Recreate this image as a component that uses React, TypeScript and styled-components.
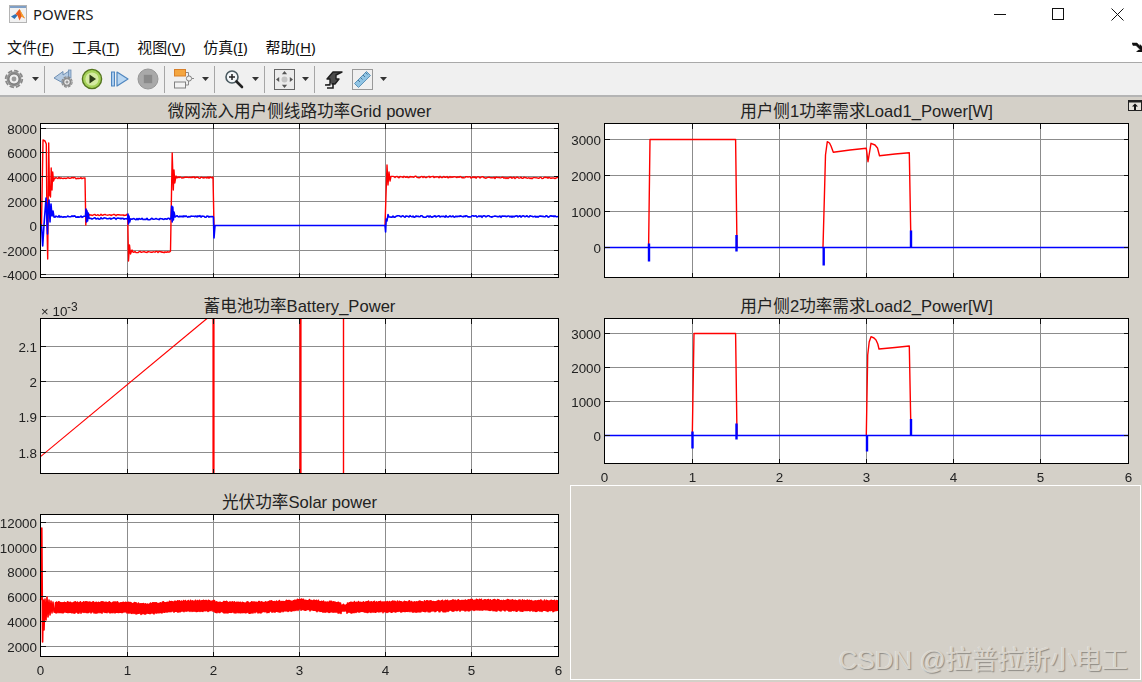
import React from 'react'
import styled, { createGlobalStyle } from 'styled-components'

type Point = [number, number]

const FONT = `"Liberation Sans", "Noto Sans CJK SC", sans-serif`
const UI_FONT = `"Noto Sans", "Noto Sans CJK SC", sans-serif`

const GlobalStyle = createGlobalStyle`
    html, body {
        margin: 0;
        padding: 0;
        background: #fff;
        overflow: hidden;
    }
`

/* ---------- trace helpers ---------- */

const rand = (i: number) => {
    const v = Math.sin(i * 12.9898 + 4.1) * 43758.5453
    return v - Math.floor(v)
}

const toPath = (pts: Point[]) =>
    pts.map(([x, y], i) => `${i === 0 ? 'M' : 'L'}${x.toFixed(1)} ${y.toFixed(1)}`).join(' ')

// flat run with a bit of measurement noise on it
const noisy = (x0: number, x1: number, y: number, amp: number, drift = 0): Point[] => {
    const pts: Point[] = []
    let i = Math.floor(x0 * 7)
    for (let x = x0; x <= x1; x += 1) {
        const slow = drift ? Math.sin(x / 38) * drift : 0
        pts.push([x, y + slow + (rand(i) - 0.5) * 2 * amp])
        i++
    }
    return pts
}

const lerp = (stops: Point[], x: number) => {
    for (let i = 1; i < stops.length; i++) {
        if (x <= stops[i][0]) {
            const [ax, ay] = stops[i - 1]
            const [bx, by] = stops[i]
            return ay + ((x - ax) / (bx - ax)) * (by - ay)
        }
    }
    return stops[stops.length - 1][1]
}

const GRID_RED_A: Point[] = [
    [41.5, 225], [43, 140], [45, 141], [46.3, 144], [47, 226], [47.7, 259], [48.7, 143],
    [49.5, 195], [50.5, 197], [51.2, 168], [52, 190], [52.7, 172], [53.5, 181], [54.5, 178],
    ...noisy(55, 84, 178, 0.7),
    [85, 178], [85.8, 225], [86.6, 210], [87.5, 218], [89, 214.5],
    ...noisy(90, 127, 215, 0.7),
    [127.7, 215], [128.5, 261], [129.5, 245], [130.5, 254], [132, 250],
    ...noisy(133, 170, 252, 0.7),
    [170.5, 251], [172.2, 153], [173.3, 190], [174, 170], [174.8, 183], [176, 176],
    ...noisy(177, 212, 177.5, 0.7),
    [213, 177], [214, 225.5],
]

const GRID_RED_B: Point[] = [
    [385, 225.5], [387, 165], [388, 185], [389, 172], [390, 181],
    ...noisy(391, 558, 177.5, 0.8, 0.5),
]

const GRID_BLUE: Point[] = [
    [40.5, 225.5], [41.5, 225], [42.7, 246], [44, 225], [46, 198], [47.5, 234], [48.2, 205], [49, 200],
    [50, 222], [51, 204], [52, 216], [53, 211], [54, 217],
    ...noisy(55, 84, 216.5, 0.8),
    [85.5, 216], [86, 209], [86.5, 222], [87, 211], [87.6, 221], [88.3, 213], [89, 218],
    ...noisy(90, 126, 218.5, 0.8),
    [127.5, 219], [128, 214], [128.5, 224], [129, 216], [129.7, 222], [130.5, 219],
    ...noisy(131, 170, 219, 0.8),
    [171, 218], [171.7, 206], [172.2, 222], [172.8, 207], [173.4, 220], [174, 212], [175, 217],
    ...noisy(176, 212, 216.5, 0.8),
    [213.4, 217], [214, 238], [215, 225.5], [385, 225.5], [385.6, 232], [386.2, 219], [387, 221], [388, 214.5], [389, 217],
    ...noisy(390, 558, 216.5, 0.8),
]

const BATTERY_LINE: Point[] = [[40.5, 456.7], [207, 318.5]]

const SOLAR_CENTER: Point[] = [
    [55, 607.5], [127, 607.5], [145, 609], [175, 606.5], [213, 605.5], [216, 607], [250, 607.5],
    [290, 606], [300, 604.5], [330, 607], [345, 608], [360, 607], [420, 606.5], [480, 605], [558, 606],
]

const solarBand = (): Point[] => {
    const pts: Point[] = [
        [40.5, 600], [41, 598], [41.8, 528], [42.6, 642], [43.3, 600], [44, 630], [45, 599], [46, 620],
        [47, 597], [48, 617], [49, 600], [50, 615], [51, 601], [52, 613], [53, 602], [54, 612],
    ]
    let i = 0
    for (let x = 55; x <= 558; x += 0.5) {
        const half = x > 341 && x < 347 ? 3.5 : 5.8
        const sign = i % 2 === 0 ? 1 : -1
        pts.push([x, lerp(SOLAR_CENTER, x) + sign * half * (0.72 + 0.28 * rand(i))])
        i++
    }
    return pts
}

const LOAD1_RED_A: Point[] = [[648.6, 247], [650, 139.5], [735.6, 139.5], [737, 247]]

const LOAD1_RED_B: Point[] = [
    [823, 247], [824.3, 200], [825.5, 155], [827.3, 141.7], [829.5, 143], [831, 146], [833.3, 152.3],
    [850, 150], [866.3, 148.3], [868, 161.7], [871, 143.3], [875, 145], [877.5, 148], [879.5, 155.7],
    [895, 154], [909.3, 152.7], [911, 247],
]

const LOAD2_RED_A: Point[] = [[692.3, 435], [694, 333.5], [735.6, 333.5], [737, 435]]

const LOAD2_RED_B: Point[] = [
    [866.3, 435], [867.7, 355], [869.2, 342], [871, 336.7], [874, 338], [876, 340], [877.8, 344],
    [879, 349], [895, 347.5], [909.3, 346], [911, 435],
]

/* ---------- icons ---------- */

const Caret = () => (
    <svg width="7" height="4" viewBox="0 0 7 4"><path d="M0 0h7L3.5 4z" fill="#333" /></svg>
)

const GearShape = ({ cx, cy, r }: { cx: number; cy: number; r: number }) => (
    <g>
        <circle cx={cx} cy={cy} r={r * 0.92} fill="none" stroke="#8a8a8a" strokeWidth={r * 0.2} strokeDasharray={`${r * 0.5} ${r * 0.22}`} />
        <circle cx={cx} cy={cy} r={r * 0.82} fill="#8e8e8e" />
        <circle cx={cx} cy={cy} r={r * 0.56} fill="#efefef" stroke="#6c6c6c" strokeWidth={r * 0.1} />
        <circle cx={cx} cy={cy} r={r * 0.27} fill="#9a9a9a" />
    </g>
)

const GearIcon = () => (
    <svg width="20" height="20" viewBox="0 0 20 20"><GearShape cx={10} cy={10} r={9} /></svg>
)

const BackIcon = () => (
    <svg width="22" height="20" viewBox="0 0 22 20">
        <path d="M1 9L10 2.5v3.5L16 2v8L10 12v2z" fill="#b5cbe2" stroke="#6f8fb3" strokeWidth="1" strokeLinejoin="round" />
        <rect x="15.5" y="1" width="2.5" height="8" fill="#a9c2dd" stroke="#6f8fb3" strokeWidth=".8" />
        <GearShape cx={14} cy={13} r={5.6} />
    </svg>
)

const PlayIcon = () => (
    <svg width="22" height="22" viewBox="0 0 22 22">
        <circle cx="11" cy="11" r="9.6" fill="#a6d25a" stroke="#55761f" strokeWidth="1.4" />
        <circle cx="11" cy="11" r="6.6" fill="#d5eaa2" />
        <path d="M8.5 6.5L15 11l-6.5 4.5z" fill="#2c3a18" />
    </svg>
)

const StepIcon = () => (
    <svg width="20" height="18" viewBox="0 0 20 18">
        <rect x="1.5" y="2" width="3" height="14" fill="#a8cbee" stroke="#4f86bf" />
        <path d="M7 2L18 9L7 16z" fill="#b8d6f2" stroke="#4f86bf" strokeWidth="1.2" strokeLinejoin="round" />
    </svg>
)

const StopIcon = () => (
    <svg width="22" height="22" viewBox="0 0 22 22">
        <circle cx="11" cy="11" r="10" fill="#a9a9a9" stroke="#979797" />
        <rect x="6.8" y="6.8" width="8.4" height="8.4" fill="#8a8a8a" />
    </svg>
)

const BlocksIcon = () => (
    <svg width="22" height="22" viewBox="0 0 22 22">
        <path d="M12 4.5h3.5v4M12 17h3.5v-4M19 10.5h2" fill="none" stroke="#8a8a8a" strokeWidth="1" />
        <rect x="1.5" y="1.5" width="11" height="6.5" fill="#f4a640" stroke="#d8802a" />
        <rect x="1.5" y="14" width="11" height="6" fill="#f2f2f2" stroke="#808080" />
        <circle cx="16" cy="10.5" r="2.6" fill="#f2f2f2" stroke="#808080" />
    </svg>
)

const ZoomIcon = () => (
    <svg width="20" height="20" viewBox="0 0 20 20">
        <circle cx="8" cy="8" r="6" fill="#f4f7f9" stroke="#4a5a60" strokeWidth="1.6" />
        <path d="M8 5v6M5 8h6" stroke="#222" strokeWidth="1.5" />
        <path d="M12.5 12.5L18 18" stroke="#222" strokeWidth="2.6" strokeLinecap="round" />
    </svg>
)

const FitIcon = () => (
    <svg width="21" height="21" viewBox="0 0 21 21">
        <rect x=".5" y=".5" width="20" height="20" fill="#ececec" stroke="#666" />
        <path d="M10.5 2l2.6 3.2H7.9zM10.5 19l2.6-3.2H7.9zM2 10.5l3.2-2.6v5.2zM19 10.5l-3.2-2.6v5.2z" fill="#555" />
        <circle cx="10.5" cy="10.5" r="3" fill="#c4c4c4" />
    </svg>
)

const TraceIcon = () => (
    <svg width="20" height="20" viewBox="0 0 20 20">
        <path d="M1 16h5v-6H3l6-7h9l-6 3v4h3l-4 5H8v-1" fill="#4a4a4a" stroke="#1e1e1e" strokeWidth="1.4" strokeLinejoin="round" />
        <path d="M3 19h6v-5" fill="none" stroke="#1e1e1e" strokeWidth="1.6" />
    </svg>
)

const RulerIcon = () => (
    <svg width="21" height="21" viewBox="0 0 21 21">
        <rect x=".5" y=".5" width="20" height="20" fill="#f0f0f0" stroke="#999" />
        <path d="M2.5 14.5L14.5 2.5L18.5 6.5L6.5 18.5z" fill="#90c4e4" stroke="#5e94b8" />
        <path d="M6 11l2 2M8.5 8.5l2 2M11 6l2 2M13.5 3.5l2 2" stroke="#3e6f92" strokeWidth=".9" />
    </svg>
)

const MatlabIcon = () => (
    <svg width="18" height="18" viewBox="0 0 18 18">
        <rect x=".5" y=".5" width="17" height="17" fill="#f1f1f1" stroke="#b4b4b4" />
        <rect x="1" y="1" width="16" height="2" fill="#7f9fc6" />
        <path d="M2 11.5L6.5 9l2 1.4L5.5 14z" fill="#2f73b5" />
        <path d="M6.5 9L10.5 4l3 5.5L16 13.5 12.5 11.5 10.5 15.5 8.5 10.4z" fill="#e9591c" />
        <path d="M10.5 4l3 5.5L16 13.5 12.5 11.5z" fill="#f4a52c" />
    </svg>
)

/* ---------- chart ---------- */

type ChartProps = {
    originX: number
    originY: number
    width: number
    height: number
    left: number
    right: number
    top: number
    bottom: number
    xTicks: number[]
    yTicks: { y: number; label: string }[]
    showXLabels?: boolean
    children?: React.ReactNode
}

const Chart = ({ originX, originY, width, height, left, right, top, bottom, xTicks, yTicks, showXLabels, children }: ChartProps) => {
    const grid = [
        ...xTicks.slice(1, -1).map(x => `M${x} ${top}V${bottom}`),
        ...yTicks.map(t => `M${left} ${t.y}H${right}`),
    ].join('')
    const marks = [
        ...xTicks.slice(1, -1).map(x => `M${x} ${top}v5M${x} ${bottom}v-5`),
        ...yTicks.map(t => `M${left} ${t.y}h5M${right} ${t.y}h-5`),
    ].join('')
    return (
        <ChartSvg width={width} height={height} viewBox={`${originX} ${originY} ${width} ${height}`}>
            <rect x={left} y={top} width={right - left} height={bottom - top} fill="#fff" />
            <GridLines d={grid} />
            {children}
            <AxisLines d={marks} />
            <AxisBox x={left} y={top} width={right - left} height={bottom - top} />
            {yTicks.map(t => (
                <TickLabel key={t.label} x={left - 3.5} y={t.y + 5} textAnchor="end">{t.label}</TickLabel>
            ))}
            {showXLabels && xTicks.map((x, i) => (
                <TickLabel key={x} x={x} y={bottom + 18.5} textAnchor="middle">{i}</TickLabel>
            ))}
        </ChartSvg>
    )
}

const LEFT_TICKS = [40.5, 127.5, 213.5, 299.5, 385.5, 471.5, 558.5]
const RIGHT_TICKS = [604.5, 692.5, 779.5, 866.5, 953.5, 1040.5, 1128.5]

const MENU = [
    { label: '文件', key: 'F' },
    { label: '工具', key: 'T' },
    { label: '视图', key: 'V' },
    { label: '仿真', key: 'I' },
    { label: '帮助', key: 'H' },
]

export default function App() {
    return (
        <Window>
            <GlobalStyle />
            <TitleBar>
                <TitleIcon><MatlabIcon /></TitleIcon>
                <WindowTitle>POWERS</WindowTitle>
                <WindowControls>
                    <ControlSlot>
                        <svg width="13" height="13" viewBox="0 0 13 13"><path d="M0 6.5h12" stroke="#111" /></svg>
                    </ControlSlot>
                    <ControlSlot>
                        <svg width="13" height="13" viewBox="0 0 13 13"><rect x=".5" y=".5" width="11" height="11" fill="none" stroke="#111" /></svg>
                    </ControlSlot>
                    <ControlSlot>
                        <svg width="13" height="13" viewBox="0 0 13 13"><path d="M.5.5l12 12M12.5.5l-12 12" stroke="#111" /></svg>
                    </ControlSlot>
                </WindowControls>
            </TitleBar>

            <MenuBar>
                {MENU.map(m => (
                    <MenuItem key={m.key}>{m.label}(<u>{m.key}</u>)</MenuItem>
                ))}
                <UndockGlyph>
                    <svg width="10" height="10" viewBox="0 0 10 10">
                        <path d="M0 1h5l3 3.2V2.5L10 4.5V10H4.5L6.5 8H8.5L4 3.5H1z" fill="#111" stroke="#111" strokeWidth=".5" />
                    </svg>
                </UndockGlyph>
            </MenuBar>

            <Toolbar>
                <ToolGroup $first>
                    <ToolButton><GearIcon /></ToolButton>
                    <CaretSlot><Caret /></CaretSlot>
                </ToolGroup>
                <ToolGroup>
                    <ToolButton><BackIcon /></ToolButton>
                    <ToolButton><PlayIcon /></ToolButton>
                    <ToolButton><StepIcon /></ToolButton>
                    <ToolButton><StopIcon /></ToolButton>
                </ToolGroup>
                <ToolGroup>
                    <ToolButton><BlocksIcon /></ToolButton>
                    <CaretSlot><Caret /></CaretSlot>
                </ToolGroup>
                <ToolGroup>
                    <ToolButton><ZoomIcon /></ToolButton>
                    <CaretSlot><Caret /></CaretSlot>
                </ToolGroup>
                <ToolGroup>
                    <ToolButton><FitIcon /></ToolButton>
                    <CaretSlot><Caret /></CaretSlot>
                </ToolGroup>
                <ToolGroup>
                    <ToolButton><TraceIcon /></ToolButton>
                    <ToolButton><RulerIcon /></ToolButton>
                    <CaretSlot><Caret /></CaretSlot>
                </ToolGroup>
            </Toolbar>

            <PlotArea>
                <CollapseButton>
                    <svg width="14" height="11" viewBox="0 0 14 11">
                        <rect x=".5" y=".5" width="13" height="10" fill="#e4e1da" stroke="#222" />
                        <path d="M1 1h12v1.5H1z" fill="#222" />
                        <path d="M7 3.5l3 3H8V10H6V6.5H4z" fill="#111" />
                    </svg>
                </CollapseButton>

                <PlotColumn>
                    <PlotTitle $left={40} $right={11}>微网流入用户侧线路功率Grid power</PlotTitle>
                    <Chart
                        originX={0} originY={123} width={570} height={169}
                        left={40.5} right={558.5} top={123.5} bottom={277.5}
                        xTicks={LEFT_TICKS}
                        yTicks={[
                            { y: 128.5, label: '8000' }, { y: 152.5, label: '6000' }, { y: 176.5, label: '4000' },
                            { y: 201.5, label: '2000' }, { y: 225.5, label: '0' }, { y: 250.5, label: '-2000' },
                            { y: 274.5, label: '-4000' },
                        ]}
                    >
                        <Trace d={toPath(GRID_RED_A)} $color="#ff0000" $width={1.4} />
                        <Trace d={toPath(GRID_RED_B)} $color="#ff0000" $width={1.4} />
                        <Trace d={toPath(GRID_BLUE)} $color="#0000ff" $width={1.6} />
                    </Chart>

                    <PlotTitle $left={40} $right={11}>蓄电池功率Battery_Power</PlotTitle>
                    <Chart
                        originX={0} originY={318} width={570} height={170}
                        left={40.5} right={558.5} top={318.5} bottom={473.5}
                        xTicks={LEFT_TICKS}
                        yTicks={[
                            { y: 346.5, label: '2.1' }, { y: 381.5, label: '2' },
                            { y: 416.5, label: '1.9' }, { y: 452.5, label: '1.8' },
                        ]}
                    >
                        <Trace d={toPath(BATTERY_LINE)} $color="#ff0000" $width={1.1} />
                        <Trace d="M213.5 318.5V473.5" $color="#ff0000" $width={2.2} />
                        <Trace d="M300.5 318.5V473.5" $color="#ff0000" $width={2.2} />
                        <Trace d="M343.5 318.5V473.5" $color="#ff0000" $width={1.4} />
                        <TickLabel x={41} y={316} $size={13}>×</TickLabel>
                        <TickLabel x={52.5} y={316}>10</TickLabel>
                        <TickLabel x={67} y={311} $size={12}>-3</TickLabel>
                    </Chart>

                    <PlotTitle $left={40} $right={11}>光伏功率Solar power</PlotTitle>
                    <Chart
                        originX={0} originY={514} width={570} height={168}
                        left={40.5} right={558.5} top={514.5} bottom={656.5}
                        xTicks={LEFT_TICKS}
                        showXLabels
                        yTicks={[
                            { y: 522.5, label: '12000' }, { y: 547.5, label: '10000' }, { y: 571.5, label: '8000' },
                            { y: 596.5, label: '6000' }, { y: 621.5, label: '4000' }, { y: 646.5, label: '2000' },
                        ]}
                    >
                        <Trace d={toPath(solarBand())} $color="#ff0000" $width={1.6} />
                    </Chart>
                </PlotColumn>

                <PlotColumn>
                    <PlotTitle $left={34} $right={13}>用户侧1功率需求Load1_Power[W]</PlotTitle>
                    <Chart
                        originX={570} originY={123} width={572} height={169}
                        left={604.5} right={1128.5} top={123.5} bottom={277.5}
                        xTicks={RIGHT_TICKS}
                        yTicks={[
                            { y: 139.5, label: '3000' }, { y: 175.5, label: '2000' },
                            { y: 211.5, label: '1000' }, { y: 247.5, label: '0' },
                        ]}
                    >
                        <Trace d={toPath(LOAD1_RED_A)} $color="#ff0000" $width={1.4} />
                        <Trace d={toPath(LOAD1_RED_B)} $color="#ff0000" $width={1.4} />
                        <Trace d="M604.5 247.5H1128.5" $color="#0000ff" $width={1.6} />
                        <Trace d="M649 243.5V261.5M736.5 235V251.5M823.7 247V265.5M911 230.5V247.5" $color="#0000ff" $width={2.4} />
                    </Chart>

                    <PlotTitle $left={34} $right={13}>用户侧2功率需求Load2_Power[W]</PlotTitle>
                    <Chart
                        originX={570} originY={318} width={572} height={167}
                        left={604.5} right={1128.5} top={318.5} bottom={463.5}
                        xTicks={RIGHT_TICKS}
                        showXLabels
                        yTicks={[
                            { y: 333.5, label: '3000' }, { y: 367.5, label: '2000' },
                            { y: 401.5, label: '1000' }, { y: 435.5, label: '0' },
                        ]}
                    >
                        <Trace d={toPath(LOAD2_RED_A)} $color="#ff0000" $width={1.4} />
                        <Trace d={toPath(LOAD2_RED_B)} $color="#ff0000" $width={1.4} />
                        <Trace d="M604.5 435.5H1128.5" $color="#0000ff" $width={1.6} />
                        <Trace d="M692.5 431.5V448.5M736.5 423.5V439.5M867 435.5V451.5M911 419V435.5" $color="#0000ff" $width={2.4} />
                    </Chart>

                    <EmptyPanel>
                        <Watermark>CSDN @拉普拉斯小电工</Watermark>
                    </EmptyPanel>
                </PlotColumn>
            </PlotArea>
        </Window>
    )
}

const Window = styled.div`
    width: 1142px;
    height: 682px;
    display: flex;
    flex-direction: column;
    background: #fff;
    overflow: hidden;
`

const TitleBar = styled.div`
    height: 28px;
    padding-bottom: 2px;
    display: flex;
    align-items: center;
    background: #fff;
`

const TitleIcon = styled.div`
    display: flex;
    margin: 0 6px 0 9px;
`

const WindowTitle = styled.div`
    font-family: ${UI_FONT};
    font-size: 15px;
    line-height: 18px;
    margin-bottom: 1px;
    color: #1a1a1a;
`

const WindowControls = styled.div`
    margin-left: auto;
    display: flex;
    gap: 34.5px;
    padding-right: 13px;
`

const ControlSlot = styled.div`
    width: 24px;
    height: 14px;
    display: flex;
    align-items: center;
    justify-content: center;
`

const MenuBar = styled.div`
    height: 32px;
    display: flex;
    align-items: center;
    gap: 18px;
    padding: 0 0 0 7px;
    position: relative;
    background: #fff;
`

const MenuItem = styled.div`
    font-family: ${UI_FONT};
    font-size: 15px;
    color: #111;
    white-space: nowrap;
    u {
        text-underline-offset: 2px;
    }
`

const UndockGlyph = styled.div`
    position: absolute;
    right: 0;
    top: 12px;
    display: flex;
`

const Toolbar = styled.div`
    height: 32px;
    display: flex;
    align-items: center;
    background: #f0f0f0;
    border-top: 1px solid #a9a9a9;
    border-bottom: 2px solid #b4b4b4;
`

const ToolGroup = styled.div<{ $first?: boolean }>`
    height: 27px;
    display: flex;
    align-items: center;
    padding: ${p => (p.$first ? '0 2px 0 0' : '0 2px 0 5px')};
    border-left: ${p => (p.$first ? 'none' : '1px solid #a6a6a6')};
`

const ToolButton = styled.div`
    width: 28px;
    display: flex;
    align-items: center;
    justify-content: center;
`

const CaretSlot = styled.div`
    width: 14px;
    display: flex;
    align-items: center;
    justify-content: center;
`

const PlotArea = styled.div`
    flex: 1;
    position: relative;
    display: grid;
    grid-template-columns: 570px 572px;
    background: #d4d0c8;
    overflow: hidden;
`

const PlotColumn = styled.div`
    display: flex;
    flex-direction: column;
`

const PlotTitle = styled.div<{ $left: number; $right: number }>`
    height: 26px;
    line-height: 29px;
    padding: 0 ${p => p.$right}px 0 ${p => p.$left}px;
    text-align: center;
    font-family: ${FONT};
    font-size: 16.6px;
    color: #222;
    white-space: nowrap;
`

const ChartSvg = styled.svg`
    display: block;
    flex: none;
    overflow: visible;
    filter: blur(0.3px);
`

const GridLines = styled.path`
    fill: none;
    stroke: #8c8c8c;
    stroke-width: 1;
    shape-rendering: crispEdges;
`

const AxisLines = styled.path`
    fill: none;
    stroke: #111;
    stroke-width: 1;
    shape-rendering: crispEdges;
`

const AxisBox = styled.rect`
    fill: none;
    stroke: #000;
    stroke-width: 1;
    shape-rendering: crispEdges;
`

const Trace = styled.path<{ $color: string; $width: number }>`
    fill: none;
    stroke: ${p => p.$color};
    stroke-width: ${p => p.$width};
    stroke-linejoin: round;
`

const TickLabel = styled.text<{ $size?: number }>`
    font-family: "Liberation Sans", sans-serif;
    font-size: ${p => p.$size ?? 13.4}px;
    fill: #222;
`

const EmptyPanel = styled.div`
    position: relative;
    box-sizing: border-box;
    width: 571px;
    height: 195px;
    border: 1px solid #fff;
`

const Watermark = styled.div`
    position: absolute;
    right: 12px;
    bottom: 2px;
    font-family: ${FONT};
    font-size: 26px;
    line-height: 34px;
    color: #d8d4cc;
    white-space: nowrap;
    text-shadow: 1px 1px 1px #8f8c86, -0.5px -0.5px 0 #eeece8;
`

const CollapseButton = styled.div`
    position: absolute;
    top: 3px;
    right: 0;
    display: flex;
`
